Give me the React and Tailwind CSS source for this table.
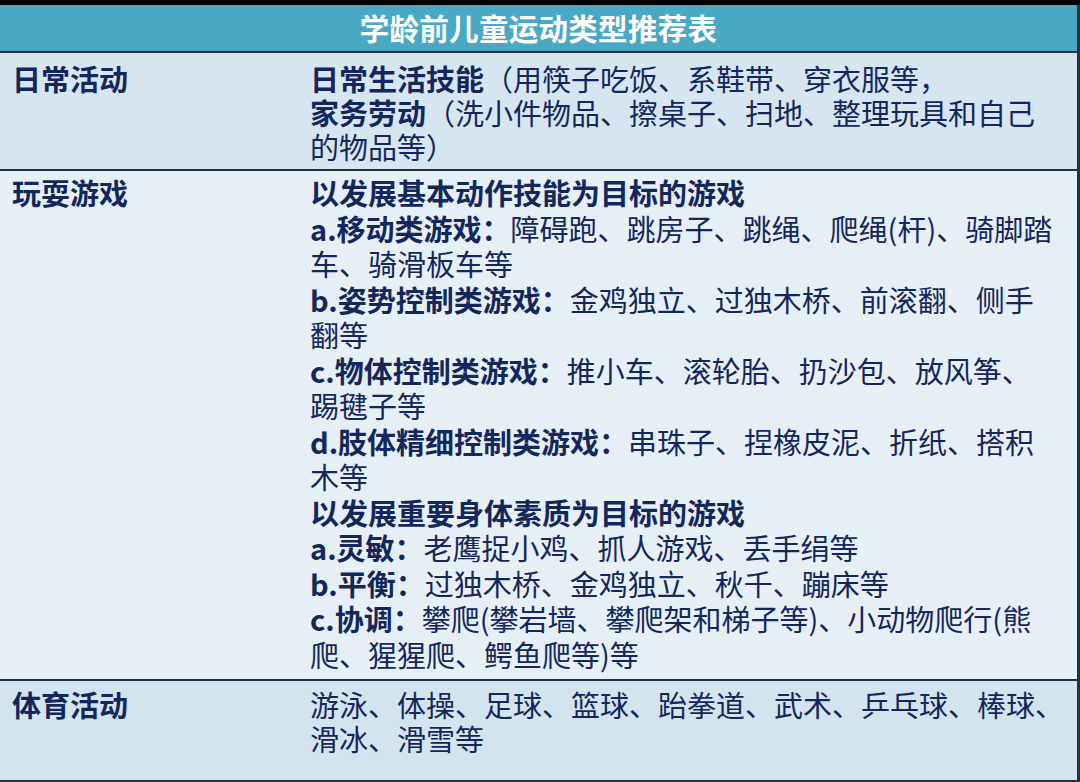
export default function App() {
  const font = { fontFamily: '"Noto Sans CJK SC", "Noto Sans", sans-serif' }

  const B = ({ children }) => <span className="font-bold">{children}</span>

  return (
    <div className="w-[1080px] h-[782px] bg-black pt-[5px] overflow-hidden text-[#14275c]" style={font}>
      <div className="border-r-[3px] border-[#26333d] h-[777px] flex flex-col">
        {/* header */}
        <div className="h-[48px] bg-[#4ba8c5] flex items-center justify-center border-b-2 border-[#24323c]">
          <h1 className="text-white font-bold text-[29.5px] leading-none tracking-[0.3px]">学龄前儿童运动类型推荐表</h1>
        </div>

        {/* 日常活动 */}
        <div className="h-[118px] bg-[#d6e5ef] grid grid-cols-[310px_1fr] border-b-2 border-[#24323c] pt-[8px] text-[29px] leading-[34px]">
          <div className="pl-[12px] font-bold">日常活动</div>
          <div className="whitespace-nowrap">
            <div><B>日常生活技能</B>（用筷子吃饭、系鞋带、穿衣服等，</div>
            <div><B>家务劳动</B>（洗小件物品、擦桌子、扫地、整理玩具和自己</div>
            <div>的物品等）</div>
          </div>
        </div>

        {/* 玩耍游戏 */}
        <div className="h-[510px] bg-[#e6eff5] grid grid-cols-[310px_1fr] border-b-2 border-[#24323c] pt-[4px] text-[29px] leading-[35.5px]">
          <div className="pl-[12px] font-bold">玩耍游戏</div>
          <div className="whitespace-nowrap">
            <div className="font-bold">以发展基本动作技能为目标的游戏</div>
            <div><B>a.移动类游戏：</B>障碍跑、跳房子、跳绳、爬绳(杆)、骑脚踏</div>
            <div>车、骑滑板车等</div>
            <div><B>b.姿势控制类游戏：</B>金鸡独立、过独木桥、前滚翻、侧手</div>
            <div>翻等</div>
            <div><B>c.物体控制类游戏：</B>推小车、滚轮胎、扔沙包、放风筝、</div>
            <div>踢毽子等</div>
            <div><B>d.肢体精细控制类游戏：</B>串珠子、捏橡皮泥、折纸、搭积</div>
            <div>木等</div>
            <div className="font-bold">以发展重要身体素质为目标的游戏</div>
            <div><B>a.灵敏：</B>老鹰捉小鸡、抓人游戏、丢手绢等</div>
            <div><B>b.平衡：</B>过独木桥、金鸡独立、秋千、蹦床等</div>
            <div><B>c.协调：</B>攀爬(攀岩墙、攀爬架和梯子等)、小动物爬行(熊</div>
            <div>爬、猩猩爬、鳄鱼爬等)等</div>
          </div>
        </div>

        {/* 体育活动 */}
        <div className="flex-1 bg-[#d4e4ee] grid grid-cols-[310px_1fr] border-b-2 border-[#24323c] pt-[6px] text-[29px] leading-[34px]">
          <div className="pl-[12px] font-bold">体育活动</div>
          <div className="whitespace-nowrap">
            <div>游泳、体操、足球、篮球、跆拳道、武术、乒乓球、棒球、</div>
            <div>滑冰、滑雪等</div>
          </div>
        </div>
      </div>
    </div>
  )
}
